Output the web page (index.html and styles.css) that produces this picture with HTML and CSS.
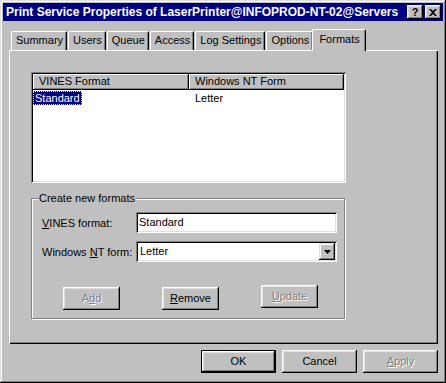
FILE: index.html
```html
<!DOCTYPE html>
<html lang="en">
<head>
    <meta charset="UTF-8">
    <title>Print Service Properties</title>
    <link rel="stylesheet" href="styles.css">
</head>
<body>

    <!-- Dialog window -->
    <div class="window">
        <div class="titlebar">
            <span class="title">Print Service Properties of LaserPrinter@INFOPROD-NT-02@Servers</span>
            <div class="title-buttons">
                <span class="tbtn help">?</span>
                <span class="tbtn">
                    <svg width="8" height="7" viewBox="0 0 8 7"><path d="M0 0h2l2 2 2-2h2L5 3.5 8 7H6L4 5 2 7H0l3-3.5z" fill="#000"/></svg>
                </span>
            </div>
        </div>

        <!-- Tabs -->
        <div class="tabs">
            <div class="tab">Summary</div>
            <div class="tab">Users</div>
            <div class="tab">Queue</div>
            <div class="tab">Access</div>
            <div class="tab">Log Settings</div>
            <div class="tab">Options</div>
            <div class="tab active">Formats</div>
        </div>

        <div class="panel">
            <!-- Formats list -->
            <div class="listbox">
                <div class="list-header">
                    <div class="col col-a">VINES Format</div>
                    <div class="col col-b">Windows NT Form</div>
                </div>
                <div class="list-row">
                    <div class="cell cell-a"><span class="selected">Standard</span></div>
                    <div class="cell cell-b">Letter</div>
                </div>
            </div>

            <!-- Create new formats -->
            <div class="group">
                <div class="group-title">Create new formats</div>
                <div class="form-grid">
                    <label><u>V</u>INES format:</label>
                    <div class="textbox">Standard</div>
                    <label>Windows <u>N</u>T form:</label>
                    <div class="textbox combo">
                        <span>Letter</span>
                        <span class="drop-btn">
                            <svg width="7" height="4" viewBox="0 0 7 4"><path d="M0 0h7L3.5 4z" fill="#000"/></svg>
                        </span>
                    </div>
                </div>
                <div class="group-buttons">
                    <div class="btn small disabled">A<u>d</u>d</div>
                    <div class="btn small"><u>R</u>emove</div>
                    <div class="btn small disabled raised-up"><u>U</u>pdate</div>
                </div>
            </div>
        </div>

        <!-- Dialog buttons -->
        <div class="dialog-buttons">
            <div class="btn default">OK</div>
            <div class="btn">Cancel</div>
            <div class="btn disabled"><u>A</u>pply</div>
        </div>
    </div>

</body>
</html>
```

FILE: styles.css
```css
/* Reset */
body, html {
    margin: 0;
    padding: 0;
    font-family: 'Liberation Sans', Arial, sans-serif;
    font-size: 11px;
    color: #000;
    background: #c0c0c0;
}

/* Window frame */
.window {
    width: 446px;
    height: 383px;
    box-sizing: border-box;
    padding: 3px;
    background: #c0c0c0;
    box-shadow: inset -1px -1px #000, inset 1px 1px #dfdfdf, inset -2px -2px #808080, inset 2px 2px #fff;
    display: flex;
    flex-direction: column;
}

/* Title bar */
.titlebar {
    height: 18px;
    background: #000080;
    display: flex;
    align-items: center;
    justify-content: space-between;
    padding: 0 2px 0 3px;
}

.title {
    color: #fff;
    font-weight: bold;
    font-size: 12px;
    line-height: 18px;
    white-space: nowrap;
}

.title-buttons {
    display: flex;
    gap: 2px;
}

.tbtn {
    width: 16px;
    height: 14px;
    box-sizing: border-box;
    background: #c0c0c0;
    box-shadow: inset -1px -1px #000, inset 1px 1px #fff, inset -2px -2px #808080, inset 2px 2px #dfdfdf;
    display: flex;
    align-items: center;
    justify-content: center;
}

.tbtn.help {
    font-weight: bold;
    font-size: 11px;
    line-height: 14px;
}

/* Tabs */
.tabs {
    display: flex;
    align-items: flex-end;
    height: 21px;
    margin: 8px 0 0 8px;
}

.tab {
    height: 18px;
    line-height: 17px;
    padding: 0 3px 0 4px;
    margin-right: 1px;
    border-top: 1px solid #fff;
    border-left: 1px solid #fff;
    border-right: 1px solid #000;
    border-radius: 2px 2px 0 0;
    box-shadow: inset -1px 0 #808080;
    background: #c0c0c0;
}

.tab.active {
    position: relative;
    z-index: 1;
    height: 21px;
    line-height: 18px;
    margin: 0 -1px -1px -2px;
    padding: 0 5px 0 6px;
}

/* Tab page */
.panel {
    height: 294px;
    box-sizing: border-box;
    margin: 0 5px 0 6px;
    padding: 22px 0 0 22px;
    box-shadow: inset 1px 1px #fff, inset -1px -1px #000, inset -2px -2px #808080;
}

/* List view */
.listbox {
    width: 315px;
    height: 111px;
    box-sizing: border-box;
    padding: 2px;
    background: #fff;
    box-shadow: inset 1px 1px #808080, inset -1px -1px #fff, inset 2px 2px #000, inset -2px -2px #dfdfdf;
}

.list-header {
    display: flex;
    height: 16px;
}

.col {
    height: 16px;
    box-sizing: border-box;
    line-height: 15px;
    padding-left: 6px;
    background: #c0c0c0;
    box-shadow: inset -1px -1px #000, inset 1px 1px #fff, inset -2px -2px #808080;
}

.col-a, .cell-a {
    width: 156px;
}

.col-b, .cell-b {
    flex: 1;
}

.list-row {
    display: flex;
    height: 14px;
    line-height: 14px;
    margin-top: 1px;
}

.cell-a {
    padding-left: 0;
}

.cell-b {
    padding-left: 6px;
}

.selected {
    display: inline-block;
    padding: 0 2px;
    background: #000080;
    color: #fff;
    outline: 1px dotted #ffff00;
    outline-offset: -1px;
}

/* Group box */
.group {
    width: 314px;
    box-sizing: border-box;
    margin-top: 15px;
    padding: 0 0 8px 10px;
    border: 1px solid #808080;
    box-shadow: inset 1px 1px #fff, 1px 1px #fff;
}

.group-title {
    width: fit-content;
    margin: -7px 0 0 -4px;
    padding: 0 1px;
    line-height: 13px;
    background: #c0c0c0;
}

.form-grid {
    display: grid;
    grid-template-columns: 94px 201px;
    row-gap: 8px;
    align-items: center;
    margin-top: 7px;
}

.textbox {
    height: 21px;
    box-sizing: border-box;
    padding: 0 3px;
    line-height: 21px;
    background: #fff;
    box-shadow: inset 1px 1px #808080, inset -1px -1px #fff, inset 2px 2px #000, inset -2px -2px #dfdfdf;
}

.combo {
    display: flex;
    justify-content: space-between;
    padding: 2px 2px 2px 4px;
    line-height: 17px;
}

.drop-btn {
    width: 16px;
    height: 17px;
    box-sizing: border-box;
    background: #c0c0c0;
    box-shadow: inset -1px -1px #000, inset 1px 1px #dfdfdf, inset -2px -2px #808080, inset 2px 2px #fff;
    display: flex;
    align-items: center;
    justify-content: center;
}

.group-buttons {
    display: flex;
    align-items: flex-start;
    gap: 42px;
    margin-top: 25px;
    padding-left: 21px;
}

/* Buttons */
.btn {
    width: 75px;
    height: 23px;
    box-sizing: border-box;
    line-height: 22px;
    text-align: center;
    background: #c0c0c0;
    box-shadow: inset -1px -1px #000, inset 1px 1px #fff, inset -2px -2px #808080, inset 2px 2px #dfdfdf;
}

.btn.small {
    width: 57px;
}

.btn.default {
    border: 1px solid #000;
    line-height: 20px;
}

.btn.disabled {
    color: #808080;
    text-shadow: 1px 1px 0 #fff;
}

.btn.raised-up {
    margin-top: -2px;
}

.dialog-buttons {
    display: flex;
    justify-content: flex-end;
    gap: 6px;
    margin-top: 6px;
    padding-right: 5px;
}
```
